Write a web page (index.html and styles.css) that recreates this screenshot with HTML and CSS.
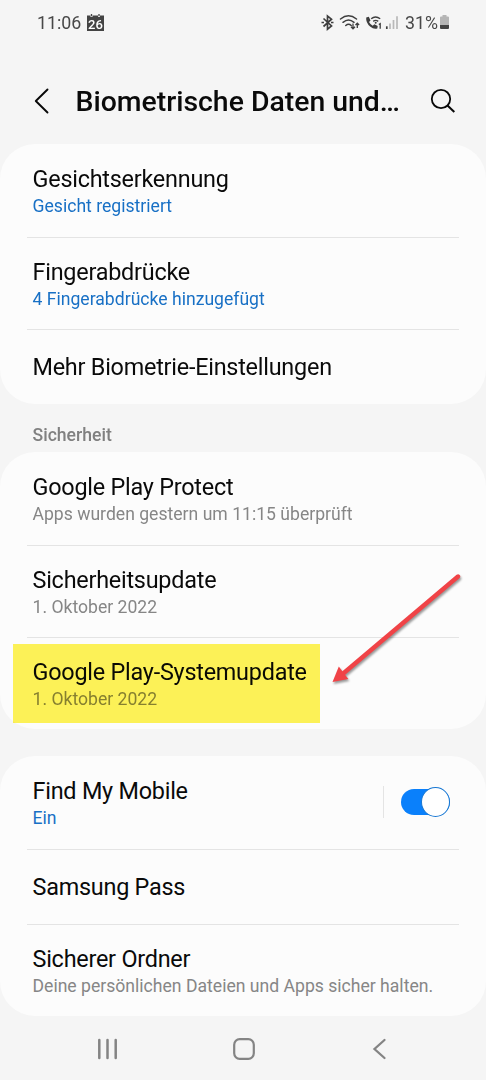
FILE: index.html
```html
<!DOCTYPE html>
<html lang="de">

<head>
    <meta charset="UTF-8">
    <meta name="viewport" content="width=device-width, initial-scale=1.0">
    <title>Biometrische Daten und Sicherheit</title>
    <link rel="stylesheet" href="styles.css">
</head>

<body>
    <div class="status-bar">
        <span class="time">11:06</span>
        <svg class="calendar" width="17" height="17" viewBox="0 0 17 17">
            <path d="M0 1.500h3.500v1.500h2v-1.500h5.500v1.500h2v-1.500h4V17H0z" fill="#444"/>
            <path d="M4.500 0v2.200M12 0v2.200" stroke="#444" stroke-width="1.300"/>
            <text class="calendar-day" x="8.500" y="14.500" text-anchor="middle">26</text>
        </svg>
        <div class="status-icons">
            <svg width="126" height="20" viewBox="320 12 126 20">
                <g fill="none" stroke="#3e3e3e" stroke-width="1.700">
                    <!-- bluetooth -->
                    <path d="M323.500 18.500l8 7.500-4 3.200V16l4 3.200-8 7.300"/>
                    <path d="M321.500 22.500h2.500M331 22.500h2.500"/>
                    <!-- wifi -->
                    <path d="M340.500 19q8-6.500 16 0M343 22.300q5.500-4.600 11 0M345.800 25.500q2.800-2.400 5.400 0" stroke-linecap="round" stroke-width="1.500"/>
                    <path d="M353 23.500v5M351 26.800l2 2 2-2M357.300 28v-5M355.500 25l1.800-1.800 1.800 1.800" stroke-width="1.300"/>
                    <!-- wifi call -->
                    <path d="M371.200 18.800q4.200-3.800 9 0M373.200 21.400q2.500-2 5 0" stroke-width="1.400"/>
                </g>
                <path d="M366.200 17.500l2.600-.7 1.700 3.600-1.500 1.700q1.300 2.400 3.700 3.700l1.700-1.500 3.300 1.700-.4 2.400q-3.300 1.300-7.200-1.800-4.400-4-3.900-9.100z" fill="#3e3e3e"/>
                <circle cx="375.700" cy="22.800" r="1" fill="#3e3e3e"/>
                <path d="M378.800 24.500l1.400-.8v5" fill="none" stroke="#3e3e3e" stroke-width="1.300"/>
                <!-- signal -->
                <path d="M386.800 26.300v2.700" stroke="#3e3e3e" stroke-width="1.700"/>
                <path d="M390 23.500V29M393.500 20v9M397 16.300V29" stroke="#b9b9b9" stroke-width="1.700"/>
            </svg>
        </div>
        <span class="percent">31%</span>
        <svg class="battery" width="9" height="14" viewBox="0 0 9 14">
            <path d="M2.500 0h4v1.500H8q1 0 1 1V10H0V2.500q0-1 1-1h1.500z" fill="#b5b5b5"/>
            <path d="M0 10h9v3q0 1-1 1H1q-1 0-1-1z" fill="#444"/>
        </svg>
    </div>

    <header class="header">
        <svg class="back" width="16" height="26" viewBox="0 0 16 26">
            <path d="M13.500 1.500L1.800 13l11.700 11.500" fill="none" stroke="#080808" stroke-width="1.900" stroke-linecap="round" stroke-linejoin="round"/>
        </svg>
        <h1>Biometrische Daten und…</h1>
        <svg class="search" width="26" height="26" viewBox="0 0 26 26">
            <circle cx="11" cy="11" r="9.200" fill="none" stroke="#080808" stroke-width="1.800"/>
            <path d="M17.500 17.500l6.800 6.500" stroke="#080808" stroke-width="2"/>
        </svg>
    </header>

    <main>
        <section class="card">
            <div class="row">
                <div class="title">Gesichtserkennung</div>
                <div class="sub active">Gesicht registriert</div>
            </div>
            <div class="row">
                <div class="title">Fingerabdrücke</div>
                <div class="sub active">4 Fingerabdrücke hinzugefügt</div>
            </div>
            <div class="row single">
                <div class="title">Mehr Biometrie-Einstellungen</div>
            </div>
        </section>

        <h2>Sicherheit</h2>

        <section class="card">
            <div class="row">
                <div class="title">Google Play Protect</div>
                <div class="sub">Apps wurden gestern um 11:15 überprüft</div>
            </div>
            <div class="row">
                <div class="title">Sicherheitsupdate</div>
                <div class="sub">1. Oktober 2022</div>
            </div>
            <div class="row marked">
                <div class="title">Google Play-Systemupdate</div>
                <div class="sub">1. Oktober 2022</div>
                <div class="highlight"></div>
            </div>
            <svg class="arrow" width="140" height="120" viewBox="326 568 140 120">
                <path d="M458 576.500L342 674.500" stroke="#f04347" stroke-width="4.400" stroke-linecap="round"/>
                <path d="M332.500 682l6.300-15.500 9.500 12.500z" fill="#f04347"/>
            </svg>
        </section>

        <section class="card last">
            <div class="row with-switch">
                <div>
                    <div class="title">Find My Mobile</div>
                    <div class="sub active">Ein</div>
                </div>
                <div class="switch-area">
                    <div class="switch"><div class="knob"></div></div>
                </div>
            </div>
            <div class="row single">
                <div class="title">Samsung Pass</div>
            </div>
            <div class="row">
                <div class="title">Sicherer Ordner</div>
                <div class="sub">Deine persönlichen Dateien und Apps sicher halten.</div>
            </div>
        </section>
    </main>

    <nav class="nav-bar">
        <svg width="22" height="22" viewBox="0 0 22 22">
            <path d="M2.300 2v18M10.500 2v18M18.700 2v18" stroke="#848484" stroke-width="2.500" stroke-linecap="round"/>
        </svg>
        <svg width="22" height="22" viewBox="0 0 22 22">
            <rect x="1.200" y="1.200" width="19.600" height="19.600" rx="5.500" fill="none" stroke="#848484" stroke-width="2.200"/>
        </svg>
        <svg width="22" height="22" viewBox="0 0 22 22">
            <path d="M16.500 2L6.500 11l10 9" fill="none" stroke="#848484" stroke-width="2.300" stroke-linecap="round"/>
        </svg>
    </nav>
</body>

</html>
```
FILE: styles.css
```css
* {
    box-sizing: border-box;
}

body {
    margin: 0;
    width: 486px;
    height: 1080px;
    overflow: hidden;
    background-color: #f5f5f5;
    font-family: Roboto, sans-serif;
    color: #0a0a0a;
}

svg {
    display: block;
    flex-shrink: 0;
}

.status-bar {
    display: flex;
    align-items: center;
    height: 44px;
    padding: 0 37px;
    color: #484848;
    font-size: 17.8px;
}

.time {
    width: 50px;
    white-space: nowrap;
}

.calendar {
    overflow: visible;
}

.calendar-day {
    font-size: 13px;
    font-weight: 500;
    fill: #fff;
}

.status-icons {
    margin-left: auto;
}

.status-bar .percent {
    margin-left: -41px;
    width: 34px;
}

.battery {
    margin-left: 1px;
}

.header {
    display: flex;
    align-items: center;
    height: 100px;
    padding: 14px 30px 0 34px;
}

.header h1 {
    flex: 1;
    margin: 2px 0 0 25.5px;
    font-size: 28.4px;
    font-weight: 500;
    line-height: 34px;
    white-space: nowrap;
}

.card {
    position: relative;
    padding: 0 27px;
    border-radius: 35px;
    background-color: #fcfcfc;
}

.row {
    height: 92px;
    padding: 20px 5.5px 0;
    white-space: nowrap;
}

.row:first-child {
    height: 93px;
    padding-top: 21px;
}

.row + .row {
    border-top: 1px solid #e4e4e4;
}

.row.single {
    height: 75px;
    padding-top: 23px;
}

.title {
    font-size: 23.4px;
    letter-spacing: -0.23px;
    line-height: 28px;
}

.sub {
    margin-top: 2px;
    color: #868686;
    font-size: 17.6px;
    line-height: 22px;
}

.sub.active {
    color: #1870c5;
}

h2 {
    margin: 0;
    padding: 20px 32.5px 6px;
    color: #808080;
    font-size: 17.6px;
    font-weight: 500;
    line-height: 22px;
}

.marked {
    position: relative;
}

/* marker pen over the last row */
.highlight {
    position: absolute;
    top: 6px;
    left: -14px;
    width: 307px;
    height: 79px;
    background-color: #fff458;
    mix-blend-mode: multiply;
}

.arrow {
    position: absolute;
    top: 116px;
    left: 326px;
    filter: drop-shadow(1px 2px 1px rgba(0, 0, 0, 0.4));
}

.card.last {
    margin-top: 27px;
}

.with-switch {
    display: flex;
    justify-content: space-between;
}

.switch-area {
    display: flex;
    align-items: center;
    width: 71px;
    height: 32px;
    margin-top: 9px;
    padding-left: 17px;
    border-left: 1px solid #e4e4e4;
}

.switch {
    display: flex;
    align-items: center;
    justify-content: flex-end;
    width: 49px;
    height: 26px;
    border-radius: 13px;
    background-color: #0a80fb;
}

.knob {
    width: 29px;
    height: 30px;
    flex-shrink: 0;
    border: 1.5px solid #1676d2;
    border-radius: 50%;
    background-color: #fff;
}

.nav-bar {
    display: flex;
    justify-content: space-between;
    padding: 22px 96px 0 97px;
}
```
